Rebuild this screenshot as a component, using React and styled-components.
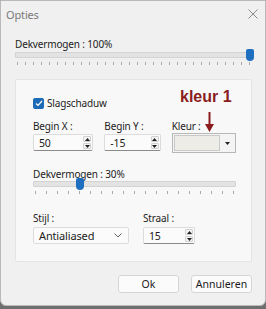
import styled, { createGlobalStyle } from "styled-components";

const Global = createGlobalStyle`
    html, body {
        margin: 0;
        padding: 0;
        background: #6f6f6f;
    }
    * {
        box-sizing: border-box;
    }
`;

const Window = styled.div`
    width: 266px;
    height: 306px;
    background: #f0f0f0;
    border: 1px solid #b9b9b9;
    border-radius: 0 0 6px 6px;
    display: flex;
    flex-direction: column;
    font-family: "Noto Sans", "Open Sans", sans-serif;
    font-size: 10px;
    letter-spacing: -0.15px;
    color: #1c1c1c;
`;

const TitleBar = styled.div`
    height: 26px;
    display: flex;
    align-items: center;
    justify-content: space-between;
    padding: 0 7px 0 5px;
    color: #7a7a7a;
    font-size: 11px;
`;

const Body = styled.div`
    padding: 10px 13px 0 14px;
    display: flex;
    flex-direction: column;
`;

const Label = styled.div`
    line-height: 14px;
    height: 14px;
    white-space: nowrap;
`;

const SliderWrap = styled.div`
    margin-top: ${(p) => p.top}px;
`;

const TrackArea = styled.div`
    position: relative;
`;

const Track = styled.div`
    height: 6px;
    background: #e3e3e3;
    border: 1px solid #d3d3d3;
    border-radius: 1px;
`;

const Thumb = styled.div`
    position: absolute;
    top: -3px;
    width: 8px;
    height: 12px;
    background: #1f6fc1;
    border-radius: 2px 2px 4px 4px;
    transform: translateX(-4px);
`;

const Ticks = styled.div`
    display: flex;
    justify-content: space-between;
    margin-top: 4px;
    padding: 0 2px;
    span {
        width: 1px;
        height: 3px;
        background: #a9a9a9;
    }
`;

const Slider = ({ value, count, top = 4 }) => (
    <SliderWrap top={top}>
        <TrackArea>
            <Track />
            <Thumb style={{ left: `${value}%` }} />
        </TrackArea>
        <Ticks>
            {Array.from({ length: count }).map((_, i) => (
                <span key={i} />
            ))}
        </Ticks>
    </SliderWrap>
);

const Group = styled.div`
    position: relative;
    margin-top: 14px;
    height: 183px;
    background: #f8f8f8;
    border: 1px solid #e4e4e4;
    border-radius: 2px;
    padding: 17px 15px 0 17px;
    display: flex;
    flex-direction: column;
`;

const CheckRow = styled.label`
    display: flex;
    align-items: center;
    gap: 3px;
    height: 12px;
`;

const Box = styled.span`
    width: 11px;
    height: 11px;
    border-radius: 2px;
    background: #1d6ab6;
    display: flex;
    align-items: center;
    justify-content: center;
`;

const Row = styled.div`
    display: flex;
    gap: ${(p) => p.gap || 12}px;
    margin-top: ${(p) => p.top}px;
`;

const Field = styled.div`
    display: flex;
    flex-direction: column;
    gap: ${(p) => p.gap ?? 2}px;
    width: ${(p) => p.w}px;
`;

const Input = styled.div`
    height: 17px;
    background: #fbfbfb;
    border: 1px solid #dcdcdc;
    border-bottom: 1px solid #8a8a8a;
    border-radius: 2px;
    display: flex;
    align-items: center;
    justify-content: space-between;
    padding: 0 1px 0 5px;
    font-size: 10.5px;
`;

const Spin = styled.div`
    display: flex;
    flex-direction: column;
    gap: 1px;
    span {
        width: 8px;
        height: 6px;
        border: 1px solid #d0d0d0;
        border-radius: 1px;
        background: #f4f4f4;
        display: flex;
        align-items: center;
        justify-content: center;
    }
`;

const ColorBox = styled.div`
    height: 20px;
    margin-top: -1px;
    border: 1px solid #b8b8b8;
    background: #f4f4f4;
    display: flex;
    padding: 1px;
`;

const Swatch = styled.div`
    flex: 1;
    background: #eeece7;
    border: 1px solid #c9c9c9;
`;

const Drop = styled.div`
    width: 14px;
    display: flex;
    align-items: center;
    justify-content: center;
`;

const Select = styled(Input)`
    border-bottom: 1px solid #dcdcdc;
    padding: 0 6px 0 5px;
    font-size: 11px;
`;

const Note = styled.div`
    position: absolute;
    left: 164px;
    top: 8px;
    display: flex;
    flex-direction: column;
    align-items: center;
    font-family: "Liberation Sans", Arial, sans-serif;
    font-weight: bold;
    font-size: 16px;
    line-height: 18px;
    letter-spacing: 0;
    color: #8a1c1e;
    svg {
        margin: 6px 0 0 7px;
    }
`;

const Footer = styled.div`
    display: flex;
    justify-content: flex-end;
    gap: 12px;
    padding-top: 13px;
`;

const Button = styled.button`
    width: 61px;
    height: 18px;
    background: #fbfbfb;
    border: 1px solid #d6d6d6;
    border-radius: 3px;
    font-family: "Noto Sans", "Open Sans", sans-serif;
    font-size: 10.5px;
    color: #1c1c1c;
    padding: 0;
`;

const Up = () => (
    <svg width="5" height="3" viewBox="0 0 5 3">
        <path d="M0 3 L2.5 0 L5 3 Z" fill="#222" />
    </svg>
);

const Down = () => (
    <svg width="5" height="3" viewBox="0 0 5 3">
        <path d="M0 0 L2.5 3 L5 0 Z" fill="#222" />
    </svg>
);

const Spinner = () => (
    <Spin>
        <span><Up /></span>
        <span><Down /></span>
    </Spin>
);

export default function App() {
    return (
        <>
            <Global />
            <Window>
                <TitleBar>
                    <span>Opties</span>
                    <svg width="10" height="10" viewBox="0 0 10 10">
                        <path d="M0.5 0.5 L9.5 9.5 M9.5 0.5 L0.5 9.5" stroke="#8a8a8a" strokeWidth="1" />
                    </svg>
                </TitleBar>
                <Body>
                    <Label>Dekvermogen : 100%</Label>
                    <Slider value={99} count={30} top={1} />

                    <Group>
                        <Note>
                            <span>kleur 1</span>
                            <svg width="9" height="20" viewBox="0 0 9 20">
                                <path d="M4.5 0 V13" stroke="#8a1c1e" strokeWidth="2" />
                                <path d="M0 12 L4.5 20 L9 12 Z" fill="#8a1c1e" />
                            </svg>
                        </Note>
                        <CheckRow>
                            <Box>
                                <svg width="8" height="7" viewBox="0 0 8 7">
                                    <path d="M1 3.5 L3 5.5 L7 1" stroke="#fff" strokeWidth="1.2" fill="none" />
                                </svg>
                            </Box>
                            <span>Slagschaduw</span>
                        </CheckRow>

                        <Row top={10} gap={11}>
                            <Field w={61} gap={1}>
                                <Label>Begin X :</Label>
                                <Input>50<Spinner /></Input>
                            </Field>
                            <Field w={57} gap={1}>
                                <Label>Begin Y :</Label>
                                <Input>-15<Spinner /></Input>
                            </Field>
                            <Field w={65} gap={1}>
                                <Label>Kleur :</Label>
                                <ColorBox>
                                    <Swatch />
                                    <Drop>
                                        <svg width="5" height="3" viewBox="0 0 5 3">
                                            <path d="M0 0 L2.5 3 L5 0 Z" fill="#222" />
                                        </svg>
                                    </Drop>
                                </ColorBox>
                            </Field>
                        </Row>

                        <Label style={{ marginTop: "14px" }}>Dekvermogen : 30%</Label>
                        <Slider value={23} count={19} top={0} />

                        <Row top={17} gap={14}>
                            <Field w={96}>
                                <Label>Stijl :</Label>
                                <Select>
                                    Antialiased
                                    <svg width="8" height="5" viewBox="0 0 8 5">
                                        <path d="M0.5 0.5 L4 4 L7.5 0.5" stroke="#666" fill="none" />
                                    </svg>
                                </Select>
                            </Field>
                            <Field w={52}>
                                <Label>Straal :</Label>
                                <Input>15<Spinner /></Input>
                            </Field>
                        </Row>
                    </Group>

                    <Footer>
                        <Button>Ok</Button>
                        <Button>Annuleren</Button>
                    </Footer>
                </Body>
            </Window>
        </>
    );
}
